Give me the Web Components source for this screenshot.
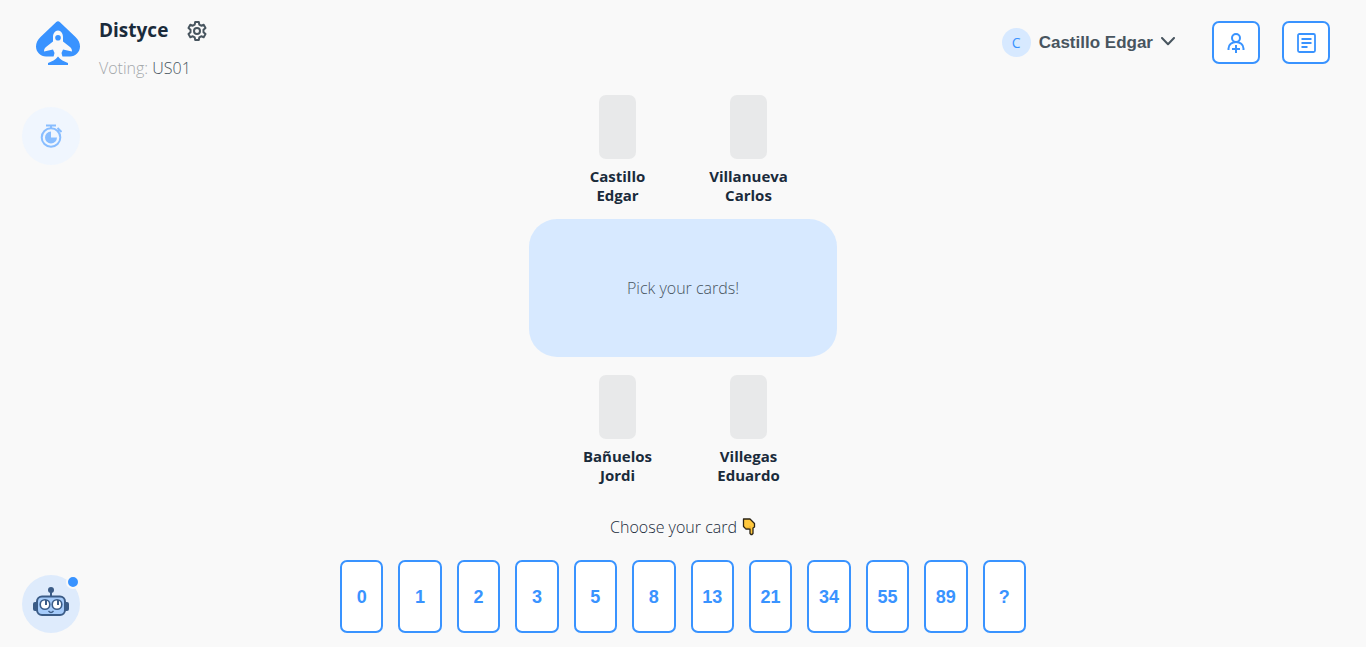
<!DOCTYPE html>
<html lang="en">
<head>
<meta charset="utf-8">
<meta name="viewport" content="width=device-width, initial-scale=1">
<title>Distyce</title>
<style>
:root{--blue:#3993ff;--pale:#d7e9ff;--ink:#1a2b3b;--slate:#48555f;--grey:#e8e9ea;--ui:"Open Sans","Segoe UI",sans-serif;--button:"Liberation Sans",Arial,sans-serif}
body{margin:0;background:#f9f9f9;color:var(--ink);font:350 16px/20px var(--ui)}
</style>
</head>
<body>
<poker-room></poker-room>
<script>
const define = (name, html, setup) => {
  const template = document.createElement('template');
  template.innerHTML = '<style>*{box-sizing:border-box}svg{display:block;flex:none}button{cursor:pointer;margin:0;padding:0}</style>' + html;
  customElements.define(name, class extends HTMLElement {
    constructor() {
      super();
      this.attachShadow({ mode: 'open' }).append(template.content.cloneNode(true));
    }
    connectedCallback() { if (setup) setup(this); }
  });
};

define('game-title', `
<style>
:host{display:flex;gap:19px}
.row{display:flex;align-items:center;gap:19px}
h1{margin:0;font-size:19px;line-height:23px;font-weight:700}
button{border:0;background:none;color:var(--slate)}
p{margin:16px 0 0;line-height:20px;color:var(--slate)}
p span{color:#a4a8ab}
svg.logo{margin-top:2px}
</style>
<svg class="logo" width="44" height="46" viewBox="0 0 44 46" role="img" aria-label="Logo">
<path fill="#3993ff" d="M20 1.200Q22-.8 24 1.200L39.500 16C42.500 19 44 22 44 25.500C44 31 39.500 35.500 34 35.500H10C4.500 35.500 0 31 0 25.500C0 22 1.500 19 4.500 16Z"/>
<path fill="#f9f9f9" d="M22 9.500C19 9.500 17 12.500 17 16V20.500L10 26C8.500 27.500 8 28.500 8 30.500L17 28.500L18.500 32L17.500 36H26.500L25.500 32L27 28.500L36 30.500C36 28.500 35.500 27.500 34 26L27 20.500V16C27 12.500 25 9.500 22 9.500Z"/>
<circle cx="22" cy="16.800" r="2.800" fill="#3993ff"/>
<path fill="#3993ff" d="M22 35.500C19.500 39 16 40.500 12 42V44H32V42C28 40.500 24.500 39 22 35.500Z"/>
</svg>
<div><div class="row"><h1>Distyce</h1>
<button aria-label="Game settings"><svg width="20" height="20" viewBox="0 0 20 20" fill="none" stroke="currentColor" stroke-width="2" stroke-linejoin="round"><path d="M8.200 1H11.800L12.300 3.600L14.200 4.700L16.700 3.800L18.500 6.900L16.500 8.700V11.300L18.500 13.100L16.700 16.200L14.200 15.300L12.300 16.400L11.800 19H8.200L7.700 16.400L5.800 15.300L3.300 16.200L1.500 13.100L3.500 11.300V8.700L1.500 6.900L3.300 3.800L5.800 4.700L7.700 3.600Z"/><circle cx="10" cy="10" r="3"/></svg></button></div>
<p><span>Voting:</span> US01</p></div>`);

define('user-menu', `
<style>
:host{display:block}
button{display:flex;align-items:center;gap:8px;border:0;background:none;color:var(--slate);font:700 17px/20px var(--button)}
.avatar{width:29px;height:29px;border-radius:50%;background:var(--pale);color:var(--blue);font:400 14px/29px var(--ui);text-align:center}
</style>
<button aria-haspopup="menu"><span class="avatar">C</span><slot></slot><svg width="14" height="12" viewBox="0 0 14 12" fill="none" stroke="currentColor" stroke-width="2" stroke-linecap="round" stroke-linejoin="round"><path d="M1 1L7 7.200L13 1"/></svg></button>`);

define('icon-button', `
<style>
:host{display:block}
button{display:grid;place-items:center;width:48px;height:43px;border:2px solid var(--blue);border-radius:7px;background:#fff;color:var(--blue)}
</style>
<button><slot></slot></button>`, el => el.shadowRoot.querySelector('button').setAttribute('aria-label', el.getAttribute('label')));

define('room-header', `
<style>
:host{display:flex;justify-content:space-between;align-items:flex-start;padding:19px 36px 0}
nav{display:flex;align-items:center;gap:22px;padding-top:2px}
user-menu{margin-right:15px}
</style>
<game-title></game-title>
<nav aria-label="Account"><user-menu>Castillo Edgar</user-menu>
<icon-button label="Invite players"><svg width="18" height="22" viewBox="0 0 18 22" fill="none" stroke="currentColor" stroke-width="2"><circle cx="9" cy="6" r="4"/><path d="M1.500 18V16.500C1.500 12.500 5 10 9 10S16.500 12.500 16.500 16.500V18M9 13V21M5 17H13"/></svg></icon-button>
<icon-button label="Show issues"><svg width="20" height="20" viewBox="0 0 20 20" fill="none" stroke="currentColor" stroke-width="1.800"><rect x="2" y="1" width="17" height="18" rx="1.500"/><path d="M5.500 6H15.500M5.500 10H15.500M5.500 14H11.500"/></svg></icon-button></nav>`);

define('tool-rail', `
<style>
:host{display:flex;flex-direction:column;justify-content:space-between;align-items:flex-start;padding:12px 0 0 22px}
button{position:relative;display:grid;place-items:center;width:58px;height:58px;border:0;border-radius:50%;background:#deebfc}
.timer{background:#f0f6fe}
.dot{position:absolute;top:0;right:0;width:14px;height:14px;border:2px solid #f9f9f9;border-radius:50%;background:var(--blue)}
</style>
<button class="timer" aria-label="Timer"><svg width="22" height="24" viewBox="0 0 22 24" fill="none" stroke="#88bdff" stroke-width="2"><circle cx="11" cy="13.500" r="9.300"/><path d="M6 1.500H16M11 1.500V5M17.500 4L21.500 8M20 5.500L17.500 8"/><path fill="#88bdff" stroke="none" d="M11 7.500V13.500H17A6 6 0 1 1 11 7.500Z"/></svg></button>
<button aria-label="Assistant"><svg width="36" height="34" viewBox="0 0 36 34"><g fill="#3b5c87"><circle cx="18" cy="3" r="3"/><path d="M17 4H19V10H17Z"/><rect x="0" y="15" width="5" height="9" rx="2"/><rect x="31" y="15" width="5" height="9" rx="2"/></g><rect x="4" y="9.500" width="28" height="18.500" rx="5" fill="#a5cbfa" stroke="#3b5c87" stroke-width="2"/><g fill="#fff" stroke="#3b5c87" stroke-width="1.600"><circle cx="12" cy="17.500" r="4.800"/><circle cx="24" cy="17.500" r="4.800"/></g><path d="M13 13V18M25 13V18" stroke="#3b5c87" stroke-width="2"/><path d="M15.500 24Q18 27 20.500 24" fill="none" stroke="#3b5c87" stroke-width="1.300"/></svg><span class="dot"></span></button>`);

define('player-seat', `
<style>
:host{display:flex;flex-direction:column;align-items:center;gap:8px}
.card{width:37px;height:64px;border-radius:7px;background:var(--grey)}
.name{max-width:96px;text-align:center;font-size:15px;font-weight:700;line-height:19px}
</style>
<div class="card"></div><div class="name"><slot></slot></div>`);

define('poker-table', `
<style>
:host{display:flex;flex-direction:column;align-items:center}
.seats{display:grid;grid-template-columns:repeat(2,131px)}
.table{display:grid;place-items:center;width:308px;height:138px;margin:14px 0 18px;border-radius:28px;background:var(--pale);color:var(--slate)}
</style>
<div class="seats"><player-seat>Castillo Edgar</player-seat><player-seat>Villanueva Carlos</player-seat></div>
<div class="table">Pick your cards!</div>
<div class="seats"><player-seat>Bañuelos Jordi</player-seat><player-seat>Villegas Eduardo</player-seat></div>`);

define('vote-card', `
<style>
:host{display:block}
button{width:100%;height:73px;border:2px solid var(--blue);border-radius:7px;background:#fff;color:var(--blue);font:700 18px/20px var(--button)}
</style>
<button><slot></slot></button>`);

define('card-picker', `
<style>
:host{display:block}
p{display:flex;justify-content:center;align-items:center;gap:5px;margin:0 0 23px}
.cards{display:grid;grid-template-columns:repeat(12,1fr);gap:15px}
</style>
<p>Choose your card <svg width="14" height="18" viewBox="0 0 14 18" role="img" aria-label="pointing down"><path d="M1.500 1H8L12.500 5.500V9L11 10V15.500L10 16.500H9L8 15.500V11H4L1.500 8.500Z" fill="#ffc83d" stroke="#2b2415" stroke-width="1.300" stroke-linejoin="round"/><path d="M4 9V10.500M6 9V10.500M8 8V11" fill="none" stroke="#e0a02a" stroke-width=".7"/></svg></p>
<div class="cards"></div>`, el => {
  const cards = el.shadowRoot.querySelector('.cards');
  cards.replaceChildren(...el.getAttribute('values').split(' ').map(value => {
    const card = document.createElement('vote-card');
    card.textContent = value;
    return card;
  }));
});

define('poker-room', `
<style>
:host{display:grid;grid-template-rows:auto 1fr;min-height:100vh;padding-bottom:14px;box-sizing:border-box}
.body{display:grid;grid-template-columns:1fr minmax(0,686px) 1fr;padding-top:17px}
main{display:flex;flex-direction:column;justify-content:space-between;gap:32px}
</style>
<room-header></room-header>
<div class="body"><tool-rail></tool-rail><main><poker-table></poker-table><card-picker values="0 1 2 3 5 8 13 21 34 55 89 ?"></card-picker></main></div>`);
</script>
</body>
</html>
